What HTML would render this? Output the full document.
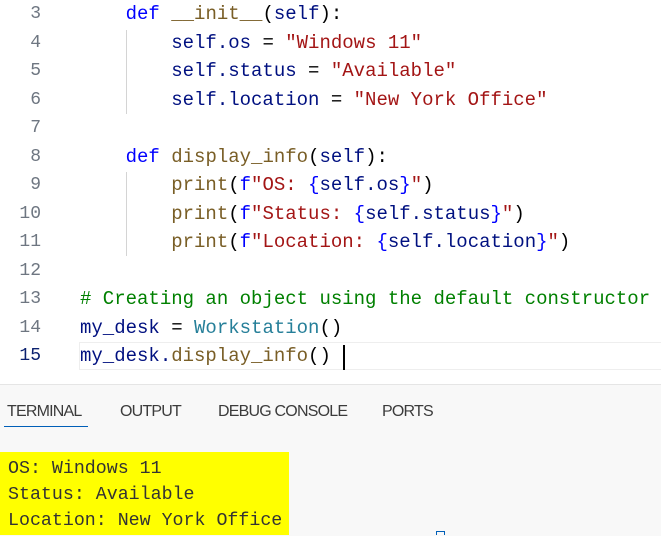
<!DOCTYPE html>
<html><head><style>
body{margin:0;width:661px;height:535px;overflow:hidden;background:#fff;position:relative;font-family:"Liberation Mono",monospace}
.ln{position:absolute;left:0;width:41px;text-align:right;font-size:18px;color:#6e7681}
.cd{position:absolute;left:80px;font-size:19px;white-space:pre;color:#001080}
.k{color:#0000ff}.f{color:#795e26}.s{color:#a31515}.c{color:#008000}.t{color:#267f99}.p{color:#000}
.term{position:absolute;left:0;top:384px;width:661px;height:151px;background:#f8f8f8;border-top:1px solid #e5e5e5}
.tab{position:absolute;top:403px;font-family:"Liberation Sans",sans-serif;font-size:16px;color:#3b3b3b;letter-spacing:-0.8px}
.out{position:absolute;left:0;top:452px;width:289px;height:83px;background:#ffff00}
.ol{position:absolute;left:8px;font-size:18.3px;color:#333;white-space:pre}
</style></head><body>
<div style="position:absolute;left:126px;top:30px;width:1px;height:84px;background:#d4d4d4"></div>
<div style="position:absolute;left:126px;top:172px;width:1px;height:84px;background:#d4d4d4"></div>
<div style="position:absolute;left:79px;top:342px;width:582px;height:28px;border:1px solid #eee;border-right:none;box-sizing:border-box"></div>
<div class="ln" style="top:4px">3</div>
<div class="ln" style="top:33px">4</div>
<div class="ln" style="top:61px">5</div>
<div class="ln" style="top:90px">6</div>
<div class="ln" style="top:118px">7</div>
<div class="ln" style="top:147px">8</div>
<div class="ln" style="top:175px">9</div>
<div class="ln" style="top:204px">10</div>
<div class="ln" style="top:232px">11</div>
<div class="ln" style="top:261px">12</div>
<div class="ln" style="top:289px">13</div>
<div class="ln" style="top:318px">14</div>
<div class="ln" style="top:346px;color:#0b216f">15</div>
<div class="cd" style="top:3px">    <span class="k">def</span> <span class="f">__init__</span><span class="p">(</span>self<span class="p">):</span></div>
<div class="cd" style="top:32px">        self.os <span class="p">=</span> <span class="s">"Windows 11"</span></div>
<div class="cd" style="top:60px">        self.status <span class="p">=</span> <span class="s">"Available"</span></div>
<div class="cd" style="top:89px">        self.location <span class="p">=</span> <span class="s">"New York Office"</span></div>
<div class="cd" style="top:146px">    <span class="k">def</span> <span class="f">display_info</span><span class="p">(</span>self<span class="p">):</span></div>
<div class="cd" style="top:174px">        <span class="f">print</span><span class="p">(</span><span class="k">f</span><span class="s">"OS: </span><span class="k">{</span>self.os<span class="k">}</span><span class="s">"</span><span class="p">)</span></div>
<div class="cd" style="top:203px">        <span class="f">print</span><span class="p">(</span><span class="k">f</span><span class="s">"Status: </span><span class="k">{</span>self.status<span class="k">}</span><span class="s">"</span><span class="p">)</span></div>
<div class="cd" style="top:231px">        <span class="f">print</span><span class="p">(</span><span class="k">f</span><span class="s">"Location: </span><span class="k">{</span>self.location<span class="k">}</span><span class="s">"</span><span class="p">)</span></div>
<div class="cd c" style="top:288px"># Creating an object using the default constructor</div>
<div class="cd" style="top:317px">my_desk <span class="p">=</span> <span class="t">Workstation</span><span class="p">()</span></div>
<div class="cd" style="top:345px">my_desk.<span class="f">display_info</span><span class="p">()</span></div>
<div style="position:absolute;left:343px;top:345px;width:2px;height:25px;background:#000"></div>
<div class="term"></div>
<div class="tab" style="left:7px">TERMINAL</div>
<div style="position:absolute;left:4px;top:426px;width:84px;height:1px;background:#005fb8"></div>
<div class="tab" style="left:120px">OUTPUT</div>
<div class="tab" style="left:218px">DEBUG CONSOLE</div>
<div class="tab" style="left:382px">PORTS</div>
<div class="out"></div>
<div class="ol" style="top:459px">OS: Windows 11</div>
<div class="ol" style="top:485px">Status: Available</div>
<div class="ol" style="top:511px">Location: New York Office</div>
<div style="position:absolute;left:436px;top:531px;width:9px;height:4px;border:1px solid #005fb8;border-bottom:none;box-sizing:border-box"></div>
</body></html>
